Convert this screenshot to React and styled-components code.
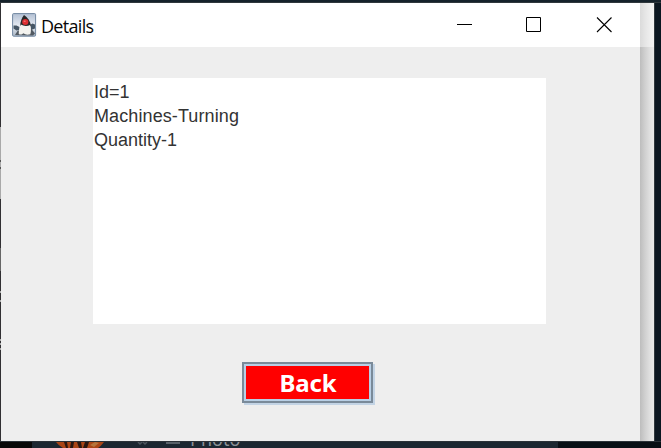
import React from 'react';
import styled, { createGlobalStyle } from 'styled-components';

const GlobalStyle = createGlobalStyle`
  * { box-sizing: border-box; }
  body { margin: 0; overflow: hidden; background: #0d151c; }
`;

const Desktop = styled.div`
  width: 661px;
  height: 448px;
  display: grid;
  grid-template-columns: 1px 639px 14px 7px;
  grid-template-rows: 3px 438px 7px;
  overflow: hidden;
  background: #0d151c;
`;

const TopEdge = styled.div`
  grid-column: 1 / -1;
  background: linear-gradient(to bottom, #15222b 0 2px, #30383d 2px);
`;

const LeftEdge = styled.div`
  background: linear-gradient(
    to bottom,
    #302f32 0 124px, #a9a9a9 124px 157px, #555 157px 159px, #a9a9a9 159px 164px,
    #555 164px 166px, #a9a9a9 166px 196px, #302f32 196px 245px, #666 245px 268px,
    #302f32 268px 288px, #aaa 288px 290px, #302f32 290px 297px, #aaa 297px 299px,
    #302f32 299px 336px, #aaa 336px 338px, #302f32 338px 340px, #aaa 340px 342px,
    #302f32 342px 345px, #aaa 345px 347px, #302f32 347px
  );
`;

const Window = styled.main`
  display: grid;
  grid-template-rows: 44px 1fr;
  background: #eee;
`;

const TitleBar = styled.header`
  display: flex;
  align-items: center;
  padding-left: 11px;
  background: #fff;
`;

const Title = styled.h1`
  flex: 1;
  margin: 1px 0 0 4px;
  font: 400 18px/24px "Open Sans", sans-serif;
  letter-spacing: -0.7px;
  color: #080808;
`;

const Controls = styled.div`
  display: flex;
  gap: 54px;
  padding-right: 28px;
`;

const ControlButton = styled.button`
  display: flex;
  width: 16px;
  height: 16px;
  padding: 0;
  border: 0;
  background: none;
`;

const Content = styled.section`
  display: flex;
  flex-direction: column;
  align-items: flex-start;
  padding: 31px 0 0 92px;
`;

const TextArea = styled.div`
  width: 453px;
  height: 246px;
  padding: 2px 1px;
  background: #fff;
  color: #333;
  font: 18px/24px "Liberation Sans", sans-serif;
`;

const TextLine = styled.p`
  margin: 0;
  letter-spacing: ${({ $tracking }) => $tracking || '0'};
`;

const BackButton = styled.button`
  width: 131px;
  height: 41px;
  margin: 38px 0 0 149px;
  padding: 0 0 0 1px;
  border: 2px solid #7a8a99;
  background: #f00;
  box-shadow: inset 0 0 0 2px #b8cfe5, 2px 2px 0 #c3d4e5;
  color: #fff;
  font: 700 24px/35px "Noto Sans", sans-serif;
  letter-spacing: -0.1px;
`;

const ShadowStrip = styled.div`
  background:
    linear-gradient(to bottom, rgba(255, 255, 255, 0.45) 44px, transparent 44px),
    linear-gradient(to right, #bdbdbd, #d0d0d0 5px, #e0e0e0 10px, #e8e8e8);
`;

const RightEdge = styled.div`
  background: linear-gradient(to right, #30383d 1px, #0b1620 1px);
`;

const Backdrop = styled.footer`
  grid-column: 1 / -1;
  display: flex;
  height: 7px;
  overflow: hidden;
  border-top: 1px solid #2b3238;
  background: linear-gradient(to right, #080808 32px, #1c2731 32px 558px, #080f15 558px);
`;

const Avatar = styled.svg`
  flex: none;
  margin-left: 55px;
`;

const PhotoIcon = styled.svg`
  flex: none;
  margin-left: 31px;
`;

const PhotoLabel = styled.span`
  margin: -15px 0 0 8px;
  font: 18px/24px "Noto Sans", sans-serif;
  color: #8c9196;
`;

const DukeIcon = () => (
  <svg width="25" height="25" viewBox="0 0 25 25">
    <defs>
      <linearGradient id="tile" x2="0" y2="1">
        <stop stopColor="#b3c0d3" />
        <stop offset=".55" stopColor="#e6ebf2" />
        <stop offset="1" stopColor="#a9b5c4" />
      </linearGradient>
    </defs>
    <rect x=".6" y=".6" width="23" height="22.6" rx="1" fill="url(#tile)" stroke="#7187a0" />
    <path d="M1.5 12.5h3l3 1.5v3l-3 .5-3-2zM18 12l2.5-1.5 2.5 1v4l-4 1.5z" fill="#465665" />
    <path d="M3 22l2.5-4 3-1 11-1 3.5 4.5-2 2z" fill="#525a62" />
    <path d="M12 2c3.6 2.2 6.3 6 7 10.8L15 14l-7-1c.5-4.6 1.8-8.4 4-11z" fill="#282828" />
    <path d="M8.8 11.5c-1.4 3-2.2 6.8-2 9.5 1.5 1 3.4.5 4.5-.7 2 1.5 4.5 1.7 7 .9 1-3 .8-6.4-.2-9.2-2.8 1.3-6.5 1.2-9.3-.5z" fill="#f4f3ef" />
    <ellipse cx="13.3" cy="9" rx="3.1" ry="2.9" fill="#df2e31" />
    <ellipse cx="12.7" cy="8.2" rx="1.1" ry=".8" fill="#f27470" />
  </svg>
);

export default function App() {
  return (
    <>
      <GlobalStyle />
      <Desktop>
        <TopEdge />
        <LeftEdge />
        <Window>
          <TitleBar>
            <DukeIcon />
            <Title>Details</Title>
            <Controls>
              <ControlButton aria-label="Minimize">
                <svg width="16" height="16"><path d="M1 7.5h15" stroke="#000" /></svg>
              </ControlButton>
              <ControlButton aria-label="Maximize">
                <svg width="16" height="16"><path d="M.5.5h14v14H.5z" fill="none" stroke="#000" /></svg>
              </ControlButton>
              <ControlButton aria-label="Close">
                <svg width="16" height="16"><path d="M1 .5l14.5 14.5M15.5 .5L1 15" stroke="#000" strokeWidth="1.1" /></svg>
              </ControlButton>
            </Controls>
          </TitleBar>
          <Content>
            <TextArea>
              <TextLine>Id=1</TextLine>
              <TextLine $tracking="0.1px">Machines-Turning</TextLine>
              <TextLine>Quantity-1</TextLine>
            </TextArea>
            <BackButton>Back</BackButton>
          </Content>
        </Window>
        <ShadowStrip />
        <RightEdge />
        <Backdrop>
          <Avatar width="50" height="6">
            <path d="M1 0h48q-3 4-6 6H8q-5-3-7-6z" fill="#a94516" />
            <path d="M9 0l2 6h2l-1-6zM16 0l-1 6h3l1-6zM22 0l2 6h3l-1-6zM30 0l-2 6h4l2-6z" fill="#291711" />
            <path d="M35 3l5-3 4 1-5 4z" fill="#b5753c" />
          </Avatar>
          <PhotoIcon width="46" height="6">
            <path d="M2 0l2 2 2-2M7 0l2 2 2-2" fill="none" stroke="#4d565e" strokeWidth="1.5" />
            <path d="M30 0h14v2H30z" fill="#59626a" />
          </PhotoIcon>
          <PhotoLabel>Photo</PhotoLabel>
        </Backdrop>
      </Desktop>
    </>
  );
}
